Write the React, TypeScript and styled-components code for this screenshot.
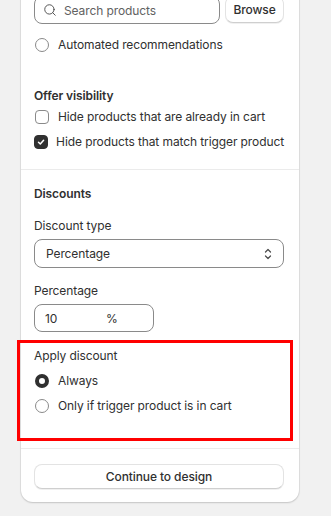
import styled, { createGlobalStyle } from "styled-components";
import { Search } from "lucide-react";

const GlobalStyle = createGlobalStyle`
  html, body {
    margin: 0;
    padding: 0;
    background: #f1f1f1;
    height: 100%;
    overflow: hidden;
  }
  body {
    font-family: Inter, "Noto Sans", sans-serif;
    font-size: 12px;
    letter-spacing: -0.1px;
    color: #303030;
  }
`;

const Card = styled.div`
  margin: -20px 0 0 21px;
  width: 278px;
  background: #ffffff;
  border-radius: 0 0 12px 12px;
  box-shadow: 0 0 0 1px rgba(0, 0, 0, 0.05), 0 1px 2px rgba(0, 0, 0, 0.14);
`;

const Section = styled.div<{ $top: number; $bottom: number; $divider?: boolean }>`
  padding: ${(p) => p.$top}px 15px ${(p) => p.$bottom}px 13px;
  border-top: ${(p) => (p.$divider ? "1px solid #ebebeb" : "none")};
`;

const SearchRow = styled.div`
  display: flex;
  align-items: flex-start;
  gap: 5px;
`;

const SearchField = styled.div`
  flex: 1;
  height: 28px;
  box-sizing: border-box;
  border: 1px solid #8a8a8a;
  border-radius: 8px;
  display: flex;
  align-items: center;
  gap: 7px;
  padding-left: 8px;
  color: #616161;
`;

const Button = styled.button<{ $full?: boolean }>`
  font-family: inherit;
  font-size: 12px;
  letter-spacing: -0.1px;
  font-weight: 500;
  color: #303030;
  background: #ffffff;
  border: 1px solid #e3e3e3;
  border-bottom-color: #cfcfcf;
  border-radius: 8px;
  box-shadow: 0 1px 0 rgba(0, 0, 0, 0.06);
  height: ${(p) => (p.$full ? 25 : 27)}px;
  width: ${(p) => (p.$full ? "100%" : "59px")};
  padding: 0;
  display: block;
`;

const Heading = styled.div`
  font-weight: 600;
  line-height: 20px;
`;

const Label = styled.div`
  line-height: 20px;
`;

const Group = styled.div<{ $mt: number }>`
  margin-top: ${(p) => p.$mt}px;
`;

const Choice = styled.label<{ $mt: number }>`
  display: flex;
  align-items: center;
  height: 20px;
  gap: 8px;
  margin-top: ${(p) => p.$mt}px;
  line-height: 20px;
  white-space: nowrap;
`;

const ControlBox = styled.span`
  width: 16px;
  display: flex;
  justify-content: center;
`;

const Radio = styled.span<{ $checked?: boolean }>`
  width: 14px;
  height: 14px;
  box-sizing: border-box;
  border-radius: 50%;
  border: ${(p) => (p.$checked ? "4px solid #303030" : "1px solid #8a8a8a")};
  background: #ffffff;
`;

const Checkbox = styled.span<{ $checked?: boolean }>`
  width: 14px;
  height: 14px;
  box-sizing: border-box;
  border-radius: 4px;
  border: 1px solid ${(p) => (p.$checked ? "#303030" : "#8a8a8a")};
  background: ${(p) => (p.$checked ? "#303030" : "#ffffff")};
  display: flex;
  align-items: center;
  justify-content: center;
`;

const Select = styled.div`
  margin-top: 3px;
  height: 29px;
  box-sizing: border-box;
  border: 1px solid #8a8a8a;
  border-radius: 8px;
  display: flex;
  align-items: center;
  justify-content: space-between;
  padding: 0 10px 0 11px;
`;

const NumberField = styled.div`
  margin-top: 3px;
  width: 120px;
  height: 28px;
  box-sizing: border-box;
  border: 1px solid #8a8a8a;
  border-radius: 8px;
  display: flex;
  align-items: center;
  padding-left: 10px;
`;

const NumberValue = styled.span`
  width: 61px;
`;

const Highlight = styled.div`
  position: relative;
  margin-top: 14px;
  padding-bottom: 2px;

  &::after {
    content: "";
    position: absolute;
    left: -17px;
    right: -9px;
    top: -6px;
    bottom: -23px;
    border: 3px solid #ff0000;
    pointer-events: none;
  }
`;

const Tick = () => (
  <svg width="10" height="10" viewBox="0 0 10 10">
    <path d="M2.5 5.2 L4.3 7 L7.6 3.2" fill="none" stroke="#fff" strokeWidth="1.5" strokeLinecap="round" strokeLinejoin="round" />
  </svg>
);

const Chevrons = () => (
  <svg width="10" height="14" viewBox="0 0 10 14">
    <path d="M2.5 5 L5 2.5 L7.5 5 M2.5 9 L5 11.5 L7.5 9" fill="none" stroke="#4a4a4a" strokeWidth="1.2" strokeLinecap="round" strokeLinejoin="round" />
  </svg>
);

export default function App() {
  return (
    <>
      <GlobalStyle />
      <Card>
        <Section $top={16} $bottom={17}>
          <SearchRow>
            <SearchField>
              <Search size={14} strokeWidth={1.6} color="#4a4a4a" />
              Search products
            </SearchField>
            <Button>Browse</Button>
          </SearchRow>
          <Choice $mt={11}>
            <ControlBox><Radio /></ControlBox>
            Automated recommendations
          </Choice>
          <Group $mt={31}>
            <Heading>Offer visibility</Heading>
            <Choice $mt={1}>
              <ControlBox><Checkbox /></ControlBox>
              Hide products that are already in cart
            </Choice>
            <Choice $mt={5}>
              <ControlBox><Checkbox $checked><Tick /></Checkbox></ControlBox>
              Hide products that match trigger product
            </Choice>
          </Group>
        </Section>
        <Section $divider $top={14} $bottom={30}>
          <Heading>Discounts</Heading>
          <Group $mt={12}>
            <Label>Discount type</Label>
            <Select>
              Percentage
              <Chevrons />
            </Select>
          </Group>
          <Group $mt={13}>
            <Label>Percentage</Label>
            <NumberField>
              <NumberValue>10</NumberValue>%
            </NumberField>
          </Group>
          <Highlight>
            <Label>Apply discount</Label>
            <Choice $mt={5}>
              <ControlBox><Radio $checked /></ControlBox>
              Always
            </Choice>
            <Choice $mt={5}>
              <ControlBox><Radio /></ControlBox>
              Only if trigger product is in cart
            </Choice>
          </Highlight>
        </Section>
        <Section $divider $top={15} $bottom={13}>
          <Button $full>Continue to design</Button>
        </Section>
      </Card>
    </>
  );
}
